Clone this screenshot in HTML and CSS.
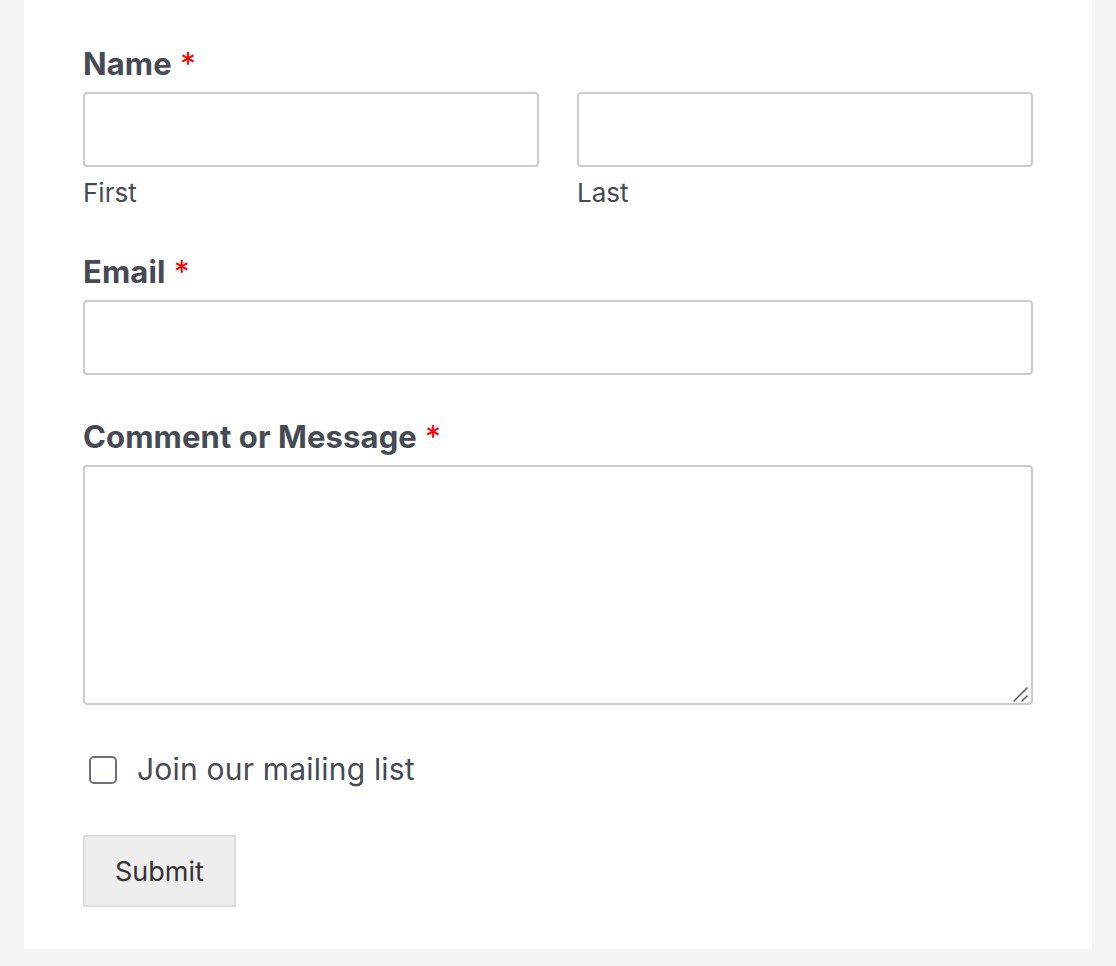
FILE: index.html
```html
<!DOCTYPE html>
<html lang="en">
<head>
  <meta charset="UTF-8" />
  <meta name="viewport" content="width=device-width, initial-scale=1.0" />
  <title>Contact Form</title>
  <link rel="stylesheet" href="styles.css">
</head>
<body>

  <div class="card">
    <form class="contact-form">

      <div class="field">
        <label class="field-label">Name <span class="required">*</span></label>
        <div class="name-row">
          <div class="name-col">
            <input type="text" class="text-input" />
            <div class="sublabel">First</div>
          </div>
          <div class="name-col">
            <input type="text" class="text-input" />
            <div class="sublabel">Last</div>
          </div>
        </div>
      </div>

      <div class="field">
        <label class="field-label">Email <span class="required">*</span></label>
        <input type="email" class="text-input" />
      </div>

      <div class="field message-field">
        <label class="field-label">Comment or Message <span class="required">*</span></label>
        <div class="textarea-wrap">
          <textarea class="text-area"></textarea>
          <!-- alça de redimensionar -->
          <svg class="resize-grip" width="16" height="16" viewBox="0 0 16 16">
            <line x1="1" y1="15" x2="14" y2="2" stroke="#50535a" stroke-width="1.4" stroke-linecap="round" />
            <line x1="9" y1="15" x2="14" y2="10" stroke="#50535a" stroke-width="1.4" stroke-linecap="round" />
          </svg>
        </div>
      </div>

      <div class="field checkbox-field">
        <label class="checkbox-label">
          <input type="checkbox" class="checkbox" />
          <span>Join our mailing list</span>
        </label>
      </div>

      <button type="submit" class="submit-btn">Submit</button>
    </form>
  </div>

</body>
</html>
```

FILE: styles.css
```css
:root {
  --fundo: #f4f4f4;
  --card: #ffffff;
  --texto: #464a54;
  --borda: #cccccc;
  --vermelho: #ff0000;
}

* {
  box-sizing: border-box;
}

body {
  font-family: Inter, 'Noto Sans', sans-serif;
  background-color: var(--fundo);
  color: var(--texto);
  margin: 0;
  padding: 0;
}

.card {
  background-color: var(--card);
  margin: 0 24px;
  padding: 44px 59px 42px 59px;
}

.field {
  margin-bottom: 42px;
}

.field-label {
  display: block;
  font-size: 31px;
  font-weight: 700;
  line-height: 39px;
  margin-bottom: 9px;
  letter-spacing: 0.1px;
}

.required {
  color: var(--vermelho);
  font-weight: 400;
  margin-left: 1px;
}

.name-row {
  display: grid;
  grid-template-columns: 1fr 1fr;
  gap: 38px;
}

.text-input {
  display: block;
  width: 100%;
  height: 75px;
  border: 2px solid var(--borda);
  border-radius: 4px;
  background-color: #fff;
  padding: 0 16px;
  font-family: inherit;
  font-size: 28px;
  color: var(--texto);
  margin: 0;
}

.sublabel {
  font-size: 26px;
  line-height: 34px;
  margin-top: 9px;
}

.textarea-wrap {
  position: relative;
}

.text-area {
  display: block;
  width: 100%;
  height: 240px;
  border: 2px solid var(--borda);
  border-radius: 4px;
  padding: 16px;
  font-family: inherit;
  font-size: 28px;
  margin: 0;
  resize: none;
}

.resize-grip {
  position: absolute;
  right: 4px;
  bottom: 3px;
  pointer-events: none;
}

.message-field {
  margin-bottom: 45px;
}

.checkbox-field {
  margin-bottom: 46px;
}

.checkbox-label {
  display: flex;
  align-items: center;
  gap: 20px;
  font-size: 30px;
  line-height: 39px;
  letter-spacing: 0.2px;
}

.checkbox {
  appearance: none;
  width: 28px;
  height: 28px;
  margin: 0 0 0 6px;
  border: 2px solid #6e7077;
  border-radius: 5px;
  background-color: #fff;
}

.submit-btn {
  display: block;
  height: 72px;
  padding: 0 30px;
  background-color: #eeeeee;
  border: 2px solid #dddddd;
  color: #333;
  font-family: inherit;
  font-size: 27px;
  cursor: pointer;
}
```
